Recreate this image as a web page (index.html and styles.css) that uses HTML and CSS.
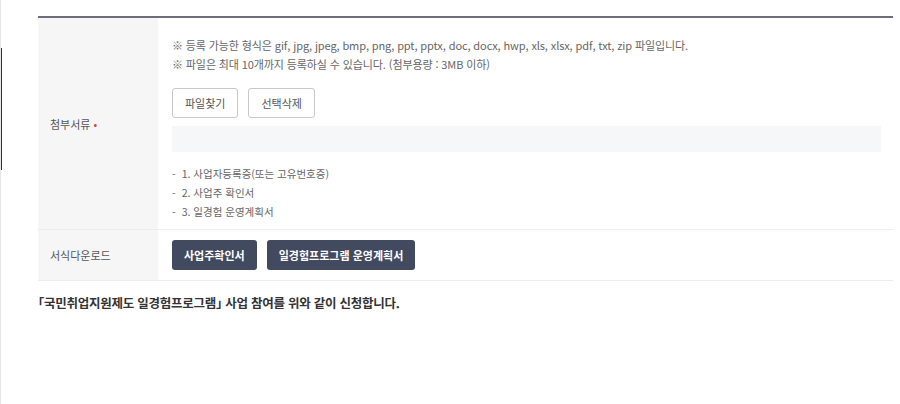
FILE: index.html
```html
<!DOCTYPE html>
<html lang="ko">
<head>
    <meta charset="UTF-8">
    <meta name="viewport" content="width=device-width, initial-scale=1.0">
    <title>일경험프로그램 참여 신청</title>
    <link rel="stylesheet" href="styles.css">
</head>
<body>
    <!-- 왼쪽 가장자리 표시 -->
    <div class="edge-mark"></div>

    <div class="wrap">
        <div class="form-table">
            <div class="row">
                <div class="label">첨부서류 <span class="req">•</span></div>
                <div class="cell">
                    <p class="note">※ 등록 가능한 형식은 gif, jpg, jpeg, bmp, png, ppt, pptx, doc, docx, hwp, xls, xlsx, pdf, txt, zip 파일입니다.</p>
                    <p class="note">※ 파일은 최대 10개까지 등록하실 수 있습니다. (첨부용량 : 3MB 이하)</p>

                    <div class="btns">
                        <button type="button" class="btn-line">파일찾기</button>
                        <button type="button" class="btn-line">선택삭제</button>
                    </div>

                    <div class="file-box"></div>

                    <ul class="doc-list">
                        <li><span class="dash">-</span>1. 사업자등록증(또는 고유번호증)</li>
                        <li><span class="dash">-</span>2. 사업주 확인서</li>
                        <li><span class="dash">-</span>3. 일경험 운영계획서</li>
                    </ul>
                </div>
            </div>
            <div class="row row-download">
                <div class="label">서식다운로드</div>
                <div class="cell">
                    <div class="btns">
                        <button type="button" class="btn-dark">사업주확인서</button>
                        <button type="button" class="btn-dark">일경험프로그램 운영계획서</button>
                    </div>
                </div>
            </div>
        </div>

        <p class="agree">｢국민취업지원제도 일경험프로그램｣ 사업 참여를 위와 같이 신청합니다.</p>
    </div>
</body>
</html>
```

FILE: styles.css
```css
body {
    margin: 0;
    height: 404px;
    background: #fff;
    font-family: 'Noto Sans CJK KR', 'Noto Sans', sans-serif;
    color: #333;
    border-left: 1px solid #e6e6e6;
    box-sizing: border-box;
    position: relative;
}

.edge-mark {
    position: absolute;
    left: -1px;
    top: 48px;
    width: 2px;
    height: 122px;
    background: #1d3557;
}

.wrap {
    padding: 16px 0 0 37px;
    width: 855px;
}

.form-table {
    border-top: 2px solid #6e6e7a;
    border-bottom: 1px solid #ececec;
}

.row {
    display: flex;
}

.row + .row {
    border-top: 1px solid #ececec;
}

.label {
    width: 120px;
    flex-shrink: 0;
    background: #f6f6f7;
    display: flex;
    align-items: center;
    padding-left: 12px;
    box-sizing: border-box;
    font-size: 11px;
    color: #555;
}

.req {
    color: #e0403a;
    margin-left: 3px;
    font-size: 11px;
}

.cell {
    flex: 1;
    padding: 18px 12px 8px 14px;
}

.note {
    margin: 0;
    font-size: 11px;
    line-height: 19px;
    color: #666;
    letter-spacing: -0.01em;
}

.btns {
    display: flex;
    gap: 10px;
}

.cell .btns {
    margin-top: 14px;
}

.row-download .cell {
    padding: 10px 12px 10px 14px;
}

.row-download .cell .btns {
    margin-top: 0;
}

button {
    font-family: inherit;
    font-size: 11px;
    height: 30px;
    border-radius: 3px;
    cursor: pointer;
}

.btn-line {
    background: #fff;
    border: 1px solid #c8c8c8;
    color: #555;
    padding: 0 12px;
}

.btn-dark {
    background: #414a5f;
    border: none;
    color: #fff;
    font-weight: bold;
    padding: 0 12px;
}

.file-box {
    margin-top: 8px;
    height: 26px;
    background: #f6f7f9;
}

.doc-list {
    list-style: none;
    margin: 12px 0 0;
    padding: 0;
    font-size: 10.5px;
    line-height: 19px;
    color: #666;
}

.dash {
    margin-right: 6px;
}

.agree {
    margin: 12px 0 0;
    font-size: 12.5px;
    font-weight: bold;
    color: #333;
    letter-spacing: -0.02em;
}
```
